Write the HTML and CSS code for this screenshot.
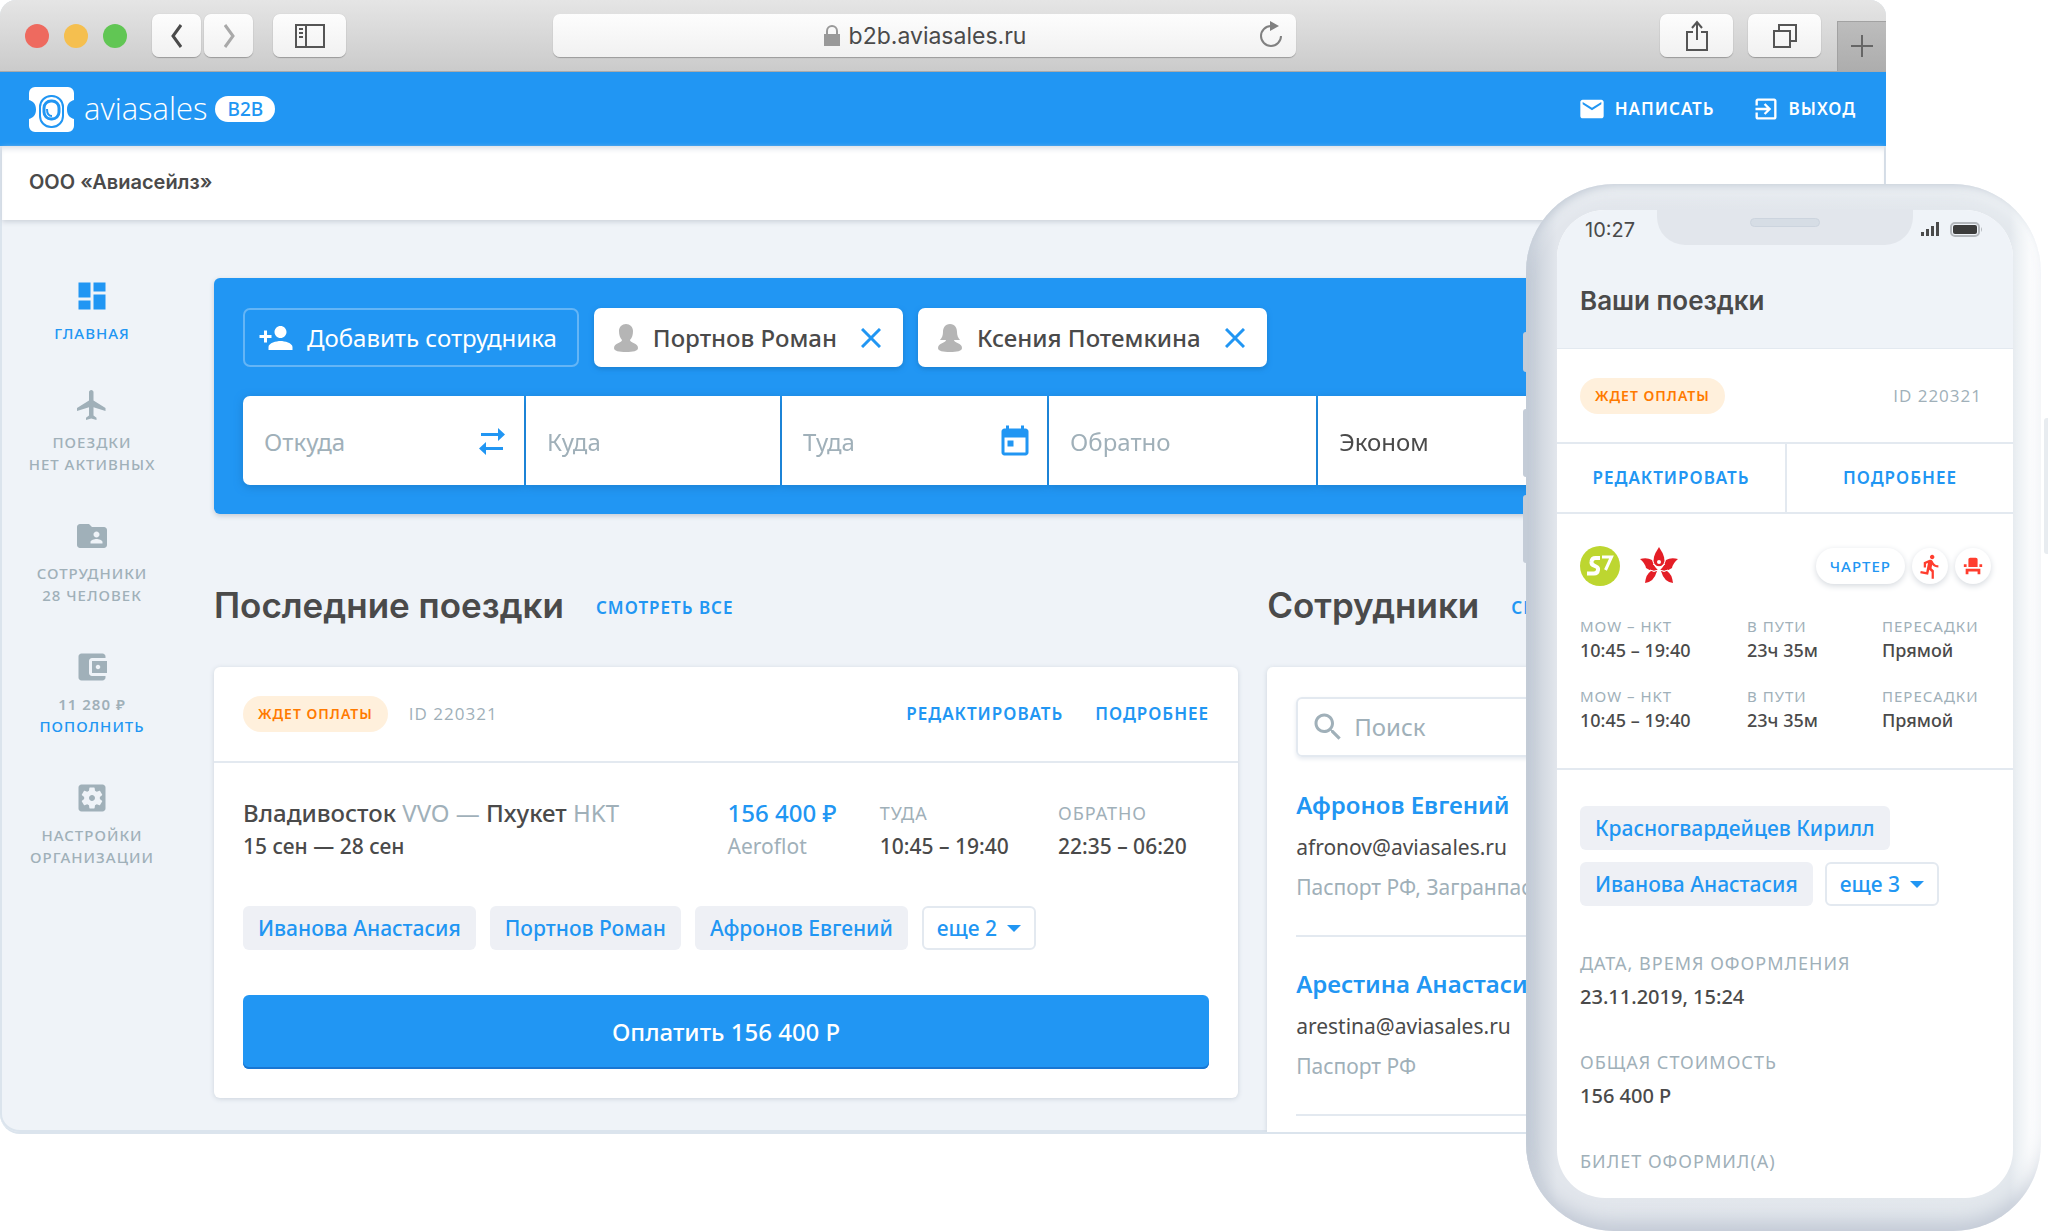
FILE: index.html
```
<!DOCTYPE html>
<html lang="ru">
<head>
<meta charset="utf-8">
<meta name="viewport" content="width=device-width, initial-scale=1">
<title>Aviasales B2B</title>
<link rel="stylesheet" href="styles.css">
</head>
<body>
<div class="stage">
  <div class="browser">
    <div class="chrome">
      <div class="lights"><span class="light light-red"></span><span class="light light-yellow"></span><span class="light light-green"></span></div>
      <div class="chrome-nav">
        <button class="chrome-btn" aria-label="Назад"><svg width="20" height="26" viewBox="0 0 20 26"><path d="M14 2 6 13l8 11" fill="none" stroke="#4a4a4a" stroke-width="3"/></svg></button>
        <button class="chrome-btn" aria-label="Вперёд"><svg width="20" height="26" viewBox="0 0 20 26"><path d="m6 2 8 11-8 11" fill="none" stroke="#a9a9a9" stroke-width="3"/></svg></button>
      </div>
      <button class="chrome-btn chrome-btn-wide" aria-label="Боковая панель"><svg width="30" height="24" viewBox="0 0 30 24"><path d="M1 1h28v22H1zM11 1v22" fill="none" stroke="#555" stroke-width="2"/><path d="M4 5h4M4 9h4M4 13h4" stroke="#555" stroke-width="2"/></svg></button>
      <div class="address">
        <svg width="18" height="22" viewBox="0 0 18 22"><path d="M1 9h16v12H1z" fill="#999"/><path d="M4 9V6a5 5 0 0 1 10 0v3" fill="none" stroke="#999" stroke-width="2"/></svg>
        <span>b2b.aviasales.ru</span>
        <button class="reload" aria-label="Обновить"><svg width="26" height="30" viewBox="0 0 26 30"><path d="M13 6a10 10 0 1 0 10 10" fill="none" stroke="#808080" stroke-width="2"/><path d="m12 1 9 5-9 5z" fill="#808080"/></svg></button>
      </div>
      <button class="chrome-btn chrome-btn-wide chrome-share" aria-label="Поделиться"><svg width="24" height="32" viewBox="0 0 24 32"><path d="M8 12H2v18h20V12h-6M12 20V3M7 8l5-6 5 6" fill="none" stroke="#555" stroke-width="2"/></svg></button>
      <button class="chrome-btn chrome-btn-wide" aria-label="Вкладки"><svg width="26" height="26" viewBox="0 0 26 26"><path d="M2 8h16v16H2zM7 8V2h17v16h-6" fill="none" stroke="#555" stroke-width="2"/></svg></button>
      <button class="new-tab" aria-label="Новая вкладка"><svg width="22" height="22" viewBox="0 0 22 22"><path d="M11 0v22M0 11h22" stroke="#666" stroke-width="2"/></svg></button>
    </div>

    <header class="topbar">
      <a class="brand" href="#">
        <svg width="45" height="45" viewBox="0 0 45 45"><path fill="#fff" d="M6 0h33a6 6 0 0 1 6 6v7c-4 1-7 4-7 9.500s3 8.500 7 9.500v7a6 6 0 0 1-6 6H6a6 6 0 0 1-6-6v-7c4-1 7-4 7-9.500S4 14 0 13V6a6 6 0 0 1 6-6z"/><rect x="11" y="9" width="23" height="31" rx="11" fill="none" stroke="#2196f3" stroke-width="2"/><rect x="15" y="14" width="15" height="18" rx="7" fill="none" stroke="#2196f3" stroke-width="3"/><path d="M18 22q0 7 5 7" fill="none" stroke="#2196f3" stroke-width="2"/></svg>
        <span class="brand-name">aviasales</span><span class="brand-tag">B2B</span>
      </a>
      <nav class="topnav">
        <a href="#"><svg width="28" height="28" viewBox="0 0 24 24"><path d="M20 4H4c-1.100 0-2 .9-2 2v12c0 1.100.9 2 2 2h16c1.100 0 2-.9 2-2V6c0-1.100-.9-2-2-2zm0 4-8 5-8-5V6l8 5 8-5v2z"/></svg>НАПИСАТЬ</a>
        <a href="#"><svg width="28" height="28" viewBox="0 0 24 24"><path d="M10.090 15.590L11.500 17l5-5-5-5-1.410 1.410L12.670 11H3v2h9.670l-2.580 2.590zM19 3H5c-1.110 0-2 .9-2 2v4h2V5h14v14H5v-4H3v4c0 1.100.89 2 2 2h14c1.100 0 2-.9 2-2V5c0-1.100-.9-2-2-2z"/></svg>ВЫХОД</a>
      </nav>
    </header>

    <div class="org">ООО «Авиасейлз»</div>

    <div class="body">
      <nav class="sidebar">
        <a class="side-item side-active" href="#"><svg width="36" height="36" viewBox="0 0 24 24"><path d="M3 13h8V3H3v10zm0 8h8v-6H3v6zm10 0h8V11h-8v10zm0-18v6h8V3h-8z"/></svg><span>ГЛАВНАЯ</span></a>
        <a class="side-item" href="#"><svg width="36" height="36" viewBox="0 0 24 24"><path d="M21 16v-2l-8-5V3.500c0-.83-.67-1.500-1.500-1.500S10 2.670 10 3.500V9l-8 5v2l8-2.500V19l-2 1.500V22l3.500-1 3.500 1v-1.500L13 19v-5.500l8 2.500z"/></svg><span>ПОЕЗДКИ</span><span>НЕТ АКТИВНЫХ</span></a>
        <a class="side-item" href="#"><svg width="36" height="36" viewBox="0 0 24 24"><path d="M20 6h-8l-2-2H4c-1.100 0-2 .9-2 2v12c0 1.100.9 2 2 2h16c1.100 0 2-.9 2-2V8c0-1.100-.9-2-2-2zm-5 3c1.100 0 2 .9 2 2s-.9 2-2 2-2-.9-2-2 .9-2 2-2zm4 8h-8v-1c0-1.330 2.670-2 4-2s4 .67 4 2v1z"/></svg><span>СОТРУДНИКИ</span><span>28 ЧЕЛОВЕК</span></a>
        <a class="side-item" href="#"><svg width="36" height="36" viewBox="0 0 24 24"><path d="M21 18v1c0 1.100-.9 2-2 2H5c-1.110 0-2-.9-2-2V5c0-1.100.89-2 2-2h14c1.100 0 2 .9 2 2v1h-9c-1.110 0-2 .9-2 2v8c0 1.100.89 2 2 2h9zm-9-2h10V8H12v8zm4-2.500c-.83 0-1.500-.67-1.500-1.500s.67-1.500 1.500-1.500 1.500.67 1.500 1.500-.67 1.500-1.500 1.500z"/></svg><span class="side-sum">11 280 ₽</span><span class="side-link">ПОПОЛНИТЬ</span></a>
        <a class="side-item" href="#"><svg width="36" height="36" viewBox="0 0 24 24"><path d="M12 10c-1.100 0-2 .9-2 2s.9 2 2 2 2-.9 2-2-.9-2-2-2zm7-7H5c-1.110 0-2 .9-2 2v14c0 1.100.89 2 2 2h14c1.110 0 2-.9 2-2V5c0-1.100-.89-2-2-2zm-1.750 9c0 .23-.02.46-.05.68l1.480 1.160c.13.11.17.3.08.45l-1.400 2.420c-.09.15-.27.21-.43.15l-1.740-.7c-.36.28-.76.51-1.180.69l-.26 1.850c-.03.17-.18.3-.35.3h-2.800c-.17 0-.32-.13-.35-.29l-.26-1.850c-.43-.18-.82-.41-1.180-.69l-1.740.7c-.16.06-.34 0-.43-.15l-1.400-2.420c-.09-.15-.05-.34.08-.45l1.480-1.160c-.03-.23-.05-.46-.05-.69 0-.23.02-.46.05-.68l-1.480-1.160c-.13-.11-.17-.3-.08-.45l1.400-2.420c.09-.15.27-.21.43-.15l1.740.7c.36-.28.76-.51 1.180-.69l.26-1.850c.03-.17.18-.3.35-.3h2.800c.17 0 .32.13.35.29l.26 1.850c.43.18.82.41 1.180.69l1.740-.7c.16-.06.34 0 .43.15l1.400 2.420c.09.15.05.34-.08.45l-1.480 1.160c.03.23.05.46.05.69z"/></svg><span>НАСТРОЙКИ</span><span>ОРГАНИЗАЦИИ</span></a>
      </nav>

      <main class="content">
        <form class="search">
          <div class="people">
            <button type="button" class="add-person"><svg width="36" height="36" viewBox="0 0 24 24"><path d="M15 12c2.210 0 4-1.790 4-4s-1.790-4-4-4-4 1.790-4 4 1.790 4 4 4zm-9-2V7H4v3H1v2h3v3h2v-3h3v-2H6zm9 4c-2.670 0-8 1.340-8 4v2h16v-2c0-2.660-5.330-4-8-4z"/></svg>Добавить сотрудника</button>
            <div class="person"><svg width="26" height="28" viewBox="0 0 26 28"><path d="M13 0c4 0 7 3 7 7 0 4-1 7-3 9 0 3 8 3 8 8 0 3-5 4-12 4S1 27 1 24c0-5 8-5 8-8-2-2-3-5-3-9 0-4 3-7 7-7z" fill="#b5b5b5"/></svg><span>Портнов Роман</span><button type="button" class="remove" aria-label="Убрать: Портнов Роман"><svg width="20" height="20" viewBox="0 0 20 20"><path d="m1 1 18 18M19 1 1 19" stroke="#2196f3" stroke-width="3"/></svg></button></div>
            <div class="person"><svg width="26" height="28" viewBox="0 0 26 28"><path d="M13 0c5 0 7 4 7 8 0 3 1 6 3 8h-6c0 3 8 3 8 8 0 3-5 4-12 4S1 27 1 24c0-5 8-5 8-8H3c2-2 3-5 3-8 0-4 2-8 7-8z" fill="#b5b5b5"/></svg><span>Ксения Потемкина</span><button type="button" class="remove" aria-label="Убрать: Ксения Потемкина"><svg width="20" height="20" viewBox="0 0 20 20"><path d="m1 1 18 18M19 1 1 19" stroke="#2196f3" stroke-width="3"/></svg></button></div>
          </div>
          <div class="fields">
            <div class="field"><input type="text" placeholder="Откуда" aria-label="Откуда"><button type="button" class="field-icon" aria-label="Поменять местами"><svg width="36" height="36" viewBox="0 0 36 36"><path d="M7 9h17V4l7 6.500-7 6.500v-5H7zM29 23H12v-5l-7 6.500 7 6.500v-5h17z"/></svg></button></div>
            <div class="field"><input type="text" placeholder="Куда" aria-label="Куда"></div>
            <div class="field"><input type="text" placeholder="Туда" aria-label="Туда"><button type="button" class="field-icon" aria-label="Календарь"><svg width="36" height="36" viewBox="0 0 24 24"><path d="M19 3h-1V1h-2v2H8V1H6v2H5c-1.110 0-2 .9-2 2v14c0 1.100.89 2 2 2h14c1.100 0 2-.9 2-2V5c0-1.100-.9-2-2-2zm0 16H5V9h14v10zM7 11h4v4H7z"/></svg></button></div>
            <div class="field"><input type="text" placeholder="Обратно" aria-label="Обратно"></div>
            <div class="field"><select aria-label="Класс"><option>Эконом</option></select></div>
          </div>
        </form>

        <div class="columns">
          <section class="column trips">
            <div class="heading"><h2>Последние поездки</h2><a class="caps-link" href="#">СМОТРЕТЬ ВСЕ</a></div>
            <article class="card">
              <div class="trip-head"><span class="badge">ЖДЕТ ОПЛАТЫ</span><span class="trip-id">ID 220321</span><a class="caps-link trip-edit" href="#">РЕДАКТИРОВАТЬ</a><a class="caps-link" href="#">ПОДРОБНЕЕ</a></div>
              <div class="trip-body">
                <div class="trip-info">
                  <div><p class="big strong">Владивосток <span class="muted">VVO —</span> Пхукет <span class="muted">HKT</span></p><p class="strong">15 сен — 28 сен</p></div>
                  <div><p class="big price">156 400 ₽</p><p class="faint">Aeroflot</p></div>
                  <div><p class="caps">ТУДА</p><p class="strong">10:45 – 19:40</p></div>
                  <div><p class="caps">ОБРАТНО</p><p class="strong">22:35 – 06:20</p></div>
                </div>
                <div class="chips trip-chips"><a class="chip" href="#">Иванова Анастасия</a><a class="chip" href="#">Портнов Роман</a><a class="chip" href="#">Афронов Евгений</a><button class="chip chip-more">еще 2<span class="caret"></span></button></div>
                <button class="pay">Оплатить 156 400 Р</button>
              </div>
            </article>
          </section>

          <section class="column">
            <div class="heading"><h2>Сотрудники</h2><a class="caps-link clipped" href="#">СМОТРЕТЬ ВСЕ</a></div>
            <div class="card staff">
              <label class="find"><svg width="36" height="36" viewBox="0 0 24 24"><path d="M15.500 14h-.79l-.28-.27C15.410 12.590 16 11.110 16 9.500 16 5.910 13.090 3 9.500 3S3 5.910 3 9.500 5.910 16 9.500 16c1.610 0 3.090-.59 4.230-1.570l.27.28v.79l5 4.990L20.490 19l-4.990-5zm-6 0C7.010 14 5 11.990 5 9.500S7.010 5 9.500 5 14 7.010 14 9.500 11.990 14 9.500 14z"/></svg><input type="search" placeholder="Поиск" aria-label="Поиск"></label>
              <div class="employee"><a class="employee-name" href="#">Афронов Евгений</a><p>afronov@aviasales.ru</p><p class="faint">Паспорт РФ, Загранпаспорт</p></div>
              <div class="employee"><a class="employee-name" href="#">Арестина Анастасия</a><p>arestina@aviasales.ru</p><p class="faint">Паспорт РФ</p></div>
            </div>
          </section>
        </div>
      </main>
    </div>
  </div>

  <div class="phone">
    <span class="key key-mute"></span><span class="key key-up"></span><span class="key key-down"></span><span class="key key-power"></span>
    <div class="notch"><span class="speaker"></span></div>
    <div class="screen">
      <div class="screen-head">
        <div class="status"><span>10:27</span>
          <svg width="62" height="18" viewBox="0 0 62 18"><path d="M0 11h3v4H0zM5 8h3v7H5zM10 5h3v10h-3zM15 1h3v14h-3z" fill="#4a4a4a"/><rect x="30" y="2" width="28" height="13" rx="4" fill="none" stroke="#b4b8bd" stroke-width="2"/><rect x="32" y="4" width="24" height="9" rx="2" fill="#3c3c3c"/><path d="M60 6q2 2.500 0 5z" fill="#b4b8bd"/></svg>
        </div>
        <h3>Ваши поездки</h3>
      </div>
      <div class="m-row"><span class="badge">ЖДЕТ ОПЛАТЫ</span><span class="trip-id">ID 220321</span></div>
      <div class="m-actions"><a class="caps-link" href="#">РЕДАКТИРОВАТЬ</a><a class="caps-link" href="#">ПОДРОБНЕЕ</a></div>
      <div class="m-flights">
        <div class="m-logos">
          <svg width="40" height="40" viewBox="0 0 40 40"><circle cx="20" cy="20" r="20" fill="#bdd630"/><path d="M20 12h-4.500q-3.500 0-4 3.500-.5 3 2.500 4l2 1q2.500 1 2 3.500-.5 3.500-4 3.500H7" fill="none" stroke="#fff" stroke-width="4"/><path d="M22 11h9.500l-6 13" fill="none" stroke="#fff" stroke-width="3"/></svg>
          <svg width="38" height="38" viewBox="0 0 38 38"><g fill="#e41e26"><path d="M19 0q8 12 4.500 17-4.500 5-9 0Q11 12 19 0z"/><path d="M0 12q7-2 12 1 2 7 6 10-7 2-12-2-1-5-6-9zM38 12q-7-2-12 1-2 7-6 10 7 2 12-2 1-5 6-9z"/><path d="M17 24q-3 11-12 12 1-9 6-12zM21 24q3 11 12 12-1-9-6-12z"/></g><circle cx="19" cy="15" r="2" fill="#fff"/><path d="M10 23q4 3 8 0M28 23q-4 3-8 0M13 17q6 6 12 0" fill="none" stroke="#fff" stroke-width="1"/></svg>
          <span class="pill">ЧАРТЕР</span>
          <span class="pill pill-round"><svg width="27" height="27" viewBox="0 0 24 24"><path d="M13.490 5.480c1.100 0 2-.9 2-2s-.9-2-2-2-2 .9-2 2 .9 2 2 2zm-3.600 13.900l1-4.400 2.100 2v6h2v-7.500l-2.100-2 .6-3c1.300 1.500 3.300 2.500 5.500 2.500v-2c-1.900 0-3.500-1-4.300-2.400l-1-1.600c-.4-.6-1-1-1.700-1-.3 0-.5.1-.8.1l-5.200 2.200v4.700h2v-3.400l1.800-.7-1.600 8.100-4.900-1-.4 2 7 1.400z"/></svg></span>
          <span class="pill pill-round"><svg width="22" height="22" viewBox="0 0 24 24"><path d="M4 18v3h3v-3h10v3h3v-6H4zm15-8h3v3h-3zM2 10h3v3H2zm15 3H7V5c0-1.100.9-2 2-2h6c1.100 0 2 .9 2 2v8z"/></svg></span>
        </div>
        <dl class="m-legs">
          <div><dt>MOW – HKT</dt><dd>10:45 – 19:40</dd></div><div><dt>В ПУТИ</dt><dd>23ч 35м</dd></div><div><dt>ПЕРЕСАДКИ</dt><dd>Прямой</dd></div>
          <div><dt>MOW – HKT</dt><dd>10:45 – 19:40</dd></div><div><dt>В ПУТИ</dt><dd>23ч 35м</dd></div><div><dt>ПЕРЕСАДКИ</dt><dd>Прямой</dd></div>
        </dl>
      </div>
      <div class="m-details">
        <div class="chips"><a class="chip" href="#">Красногвардейцев Кирилл</a><a class="chip" href="#">Иванова Анастасия</a><button class="chip chip-more">еще 3<span class="caret"></span></button></div>
        <dl class="m-facts">
          <div><dt>ДАТА, ВРЕМЯ ОФОРМЛЕНИЯ</dt><dd>23.11.2019, 15:24</dd></div>
          <div><dt>ОБЩАЯ СТОИМОСТЬ</dt><dd>156 400 Р</dd></div>
          <div><dt>БИЛЕТ ОФОРМИЛ(А)</dt></div>
        </dl>
      </div>
    </div>
  </div>
</div>
</body>
</html>
```
FILE: styles.css
```
:root {
  --blue: #2196f3;
  --text: #4a4a4a;
  --muted: #a0b0b9;
  --line: #e3e9f0;
  --page: #eff3f8;
}
* { box-sizing: border-box; }
body { margin: 0; background: #fff; color: var(--text); font: 400 21px/32px "Noto Sans", "Open Sans", sans-serif; }
a { color: inherit; text-decoration: none; }
p, h2, h3, dl, dd { margin: 0; }
button, input, select { font: inherit; color: inherit; border: 0; background: none; padding: 0; margin: 0; }
button { cursor: pointer; }
svg { display: block; flex: none; fill: currentColor; }

/* The phone shares the browser's grid cell and lies over its right edge */
.stage { display: grid; align-items: start; overflow: hidden; }
.browser, .phone { grid-area: 1 / 1; }

/* Browser window */
.browser { width: 92.1%; border-radius: 16px 16px 20px 20px; overflow: hidden; background: var(--page); border-bottom: 2px solid #dbe4ed; box-shadow: inset 0 0 0 2px #dbe4ed; }
.chrome { display: flex; align-items: center; height: 72px; padding-left: 25px; background: linear-gradient(#e5e5e5, #cbcbcb); border-bottom: 1px solid #aaa; }
.lights { display: flex; gap: 15px; margin-right: 25px; }
.light { width: 24px; height: 24px; border-radius: 50%; }
.light-red { background: #ee6a5f; }
.light-yellow { background: #f5bf4f; }
.light-green { background: #61c654; }
.chrome-nav { display: flex; gap: 3px; margin-right: 20px; }
.chrome-btn { display: flex; align-items: center; justify-content: center; width: 49px; height: 43px; border-radius: 7px; background: linear-gradient(#fdfdfd, #f1f1f1); box-shadow: 0 1px 1px #9a9a9a, 0 0 1px #bbb; }
.chrome-btn-wide { width: 73px; }
.address { display: flex; align-items: center; justify-content: center; gap: 8px; width: 743px; height: 43px; margin-left: 207px; position: relative; border-radius: 7px; background: linear-gradient(#fdfdfd, #f1f1f1); box-shadow: 0 1px 1px #9a9a9a; font: 400 23px/32px Inter, Roboto, sans-serif; }
.reload { position: absolute; right: 12px; top: 6px; }
.chrome-share { margin: 0 15px 0 auto; }
.new-tab { display: flex; align-items: center; justify-content: center; align-self: flex-end; width: 49px; height: 50px; margin-left: 16px; background: linear-gradient(#bdbdbd, #adadad); box-shadow: inset 1px 1px 0 #a2a2a2; }

.topbar { display: flex; align-items: center; justify-content: space-between; height: 74px; padding: 0 30px 0 29px; background: var(--blue); color: #fff; }
.brand { display: flex; align-items: center; }
.brand-name { margin: 0 8px 3px 10px; font: 300 31px/40px "Open Sans", sans-serif; }
.brand-tag { padding: 0 12px; border-radius: 13px; background: #fff; color: var(--blue); font-size: 19px; font-weight: 500; line-height: 26px; }
.topnav { display: flex; gap: 37px; font-size: 17px; font-weight: 600; letter-spacing: 1px; }
.topnav a { display: flex; align-items: center; gap: 9px; }
.org { height: 74px; padding: 0 27px; margin: 0 2px; background: #fff; box-shadow: inset 0 6px 6px -4px #d5dbe2, 0 2px 5px #ccd2da; position: relative; font: 600 20px/72px Inter, Roboto, sans-serif; }

.body { display: flex; }
.sidebar { display: flex; flex-direction: column; gap: 43px; width: 184px; flex: none; padding-top: 58px; }
.side-item { display: flex; flex-direction: column; align-items: center; color: var(--muted); font-size: 15px; font-weight: 500; line-height: 22px; letter-spacing: 1px; white-space: nowrap; }
.side-item svg { margin-bottom: 8px; }
.side-active, .side-link { color: var(--blue); }
.side-sum { font-weight: 600; }
.content { flex: 1; min-width: 0; padding: 58px 29px 0 30px; }

/* Search panel */
.search { padding: 30px 29px 29px; border-radius: 6px; background: var(--blue); box-shadow: 0 2px 5px #c6ccd5; }
.people { display: flex; gap: 15px; margin-bottom: 29px; font-size: 24px; }
.add-person { display: flex; align-items: center; gap: 13px; height: 59px; padding: 0 20px 0 13px; border: 2px solid #64b5f6; border-radius: 7px; color: #fff; }
.person { display: flex; align-items: center; height: 59px; padding: 0 22px 0 19px; border-radius: 7px; background: #fff; box-shadow: 0 2px 5px #1b7fd0; font-weight: 500; }
.person span { margin: 0 24px 0 14px; }
.fields { display: grid; grid-template-columns: 281fr 254fr 265fr 267fr 510fr; gap: 2px; font-size: 24px; filter: drop-shadow(0 2px 4px #1b7fd0); }
.field { display: flex; align-items: center; min-width: 0; height: 89px; padding: 2px 14px 0 21px; background: #fff; }
.field:first-child { border-radius: 7px 0 0 7px; }
.field:last-child { border-radius: 0 7px 7px 0; }
.field input, .field select { flex: 1; min-width: 0; width: 100%; appearance: none; }
.field-icon { color: var(--blue); }
input::placeholder { color: var(--muted); opacity: 1; }

/* Two-column area */
.columns { display: grid; grid-template-columns: 1024fr 590fr; gap: 29px; padding-top: 69px; }
.column { display: flex; flex-direction: column; min-width: 0; }
.trips { padding-bottom: 34px; }
.heading { display: flex; align-items: center; gap: 32px; margin-bottom: 40px; white-space: nowrap; }
.heading .caps-link { padding-top: 5px; }
.clipped { width: 56px; overflow: hidden; }
h2 { font: 600 35px/44px Inter, Roboto, sans-serif; }
.caps-link { color: var(--blue); font-size: 17px; font-weight: 600; letter-spacing: 1px; }
.card { border-radius: 6px; background: #fff; box-shadow: 0 1px 5px #ccd3dc; }
.trip-head { display: flex; align-items: center; height: 96px; padding: 0 29px; border-bottom: 2px solid var(--line); }
.badge { padding: 0 15px; border-radius: 18px; background: #fff0dc; color: #ff7a00; font-size: 14px; font-weight: 600; line-height: 36px; letter-spacing: 1px; }
.trip-id { margin-left: 21px; color: var(--muted); font: 500 17px/32px "Open Sans", sans-serif; letter-spacing: 1px; }
.trip-edit { margin: 0 32px 0 auto; }
.trip-body { padding: 34px 29px 29px; }
.trip-info { display: grid; grid-template-columns: 484fr 152fr 178fr 151fr; white-space: nowrap; }
.trip-info p + p { line-height: 34px; }
.big { font-size: 24px; }
.strong { font-weight: 500; }
.muted { color: var(--muted); font-weight: 400; }
.faint { color: var(--muted); }
.price { color: var(--blue); font-weight: 500; }
.caps { color: var(--muted); font-size: 18px; letter-spacing: 1px; }
.chips { display: flex; flex-wrap: wrap; gap: 12px; }
.trip-chips { gap: 14px; margin: 43px 0 45px; }
.chip { display: flex; align-items: center; height: 44px; padding: 0 15px; border-radius: 6px; background: #eef0f5; color: var(--blue); font-weight: 500; white-space: nowrap; }
.chip-more { gap: 10px; border: 2px solid var(--line); background: #fff; padding: 0 13px; }
.caret { border: 7px solid transparent; border-top-color: var(--blue); border-bottom: 0; }
.pay { display: block; width: 100%; height: 74px; border-radius: 6px; background: var(--blue); box-shadow: inset 0 -2px 0 #1976d2; color: #fff; font-size: 24px; font-weight: 500; }

.staff { flex: 1; padding: 30px 0 0 29px; border-radius: 6px 6px 0 0; }
.find { display: flex; align-items: center; gap: 8px; height: 60px; margin: 0 29px 31px 0; padding-left: 12px; border: 2px solid var(--line); border-radius: 6px; box-shadow: 0 2px 4px #e6eaf0; color: var(--muted); font-size: 24px; }
.find input { flex: 1; min-width: 0; appearance: none; }
.employee { padding-bottom: 28px; margin-bottom: 30px; border-bottom: 2px solid var(--line); line-height: 40px; }
.employee:last-child { margin-bottom: 16px; }
.employee-name { display: block; color: var(--blue); font-size: 24px; font-weight: 600; line-height: 34px; margin-bottom: 5px; }

/* Phone */
.phone { position: relative; justify-self: end; margin: 184px 7px 0 0; width: 515px; padding: 26px 28px 33px 31px; border-radius: 88px;
  background: linear-gradient(to right, #b4bdca 0, #c3cbd6 6px, #d3d9e1 16px, #e2e6ec 31px, #e3e8ed 484px, #edf1f4 492px, #fafbfc 504px, #fff 515px);
  box-shadow: inset 5px 6px 10px -4px #c3cbd6, inset 0 12px 18px -6px #f4f7f9, inset 0 -18px 18px -8px #c3cad6; }
.screen { border-radius: 48px; overflow: hidden; background: #fff; }
.screen-head { height: 139px; padding: 4px 30px 0 23px; background: var(--page); border-bottom: 1px solid var(--line); }
.status { display: flex; align-items: center; justify-content: space-between; padding-left: 5px; font: 400 20px/32px Inter, Roboto, sans-serif; }
h3 { margin-top: 39px; font: 600 26px/32px Inter, Roboto, sans-serif; }
.notch { position: absolute; top: 25px; left: 131px; width: 256px; height: 36px; border-radius: 0 0 28px 28px; background: #e2e6ec; }
.speaker { display: block; width: 70px; height: 9px; margin: 9px auto 0; border: 1px solid #ccd4de; border-radius: 5px; background: #d6dde5; }
.key { position: absolute; left: -3px; width: 4px; border-radius: 3px 0 0 3px; background: #c4ccd7; }
.key-mute { top: 148px; height: 40px; }
.key-up { top: 225px; height: 68px; }
.key-down { top: 311px; height: 68px; }
.key-power { left: auto; right: -7px; top: 234px; height: 136px; background: #e8ecf0; }
.m-row { display: flex; align-items: center; justify-content: space-between; height: 95px; padding: 0 31px 0 23px; border-bottom: 2px solid var(--line); }
.m-actions { display: grid; grid-template-columns: 1fr 1fr; height: 70px; border-bottom: 2px solid var(--line); }
.m-actions a { display: flex; align-items: center; justify-content: center; }
.m-actions a + a { border-left: 2px solid var(--line); }
.m-flights { padding: 32px 22px 36px 23px; border-bottom: 2px solid var(--line); }
.m-logos { display: flex; align-items: center; gap: 20px; margin-bottom: 28px; }
.pill { display: flex; align-items: center; justify-content: center; height: 36px; padding: 0 14px; margin-left: auto; border-radius: 18px; background: #fff; box-shadow: 0 2px 6px #d5d9de; color: var(--blue); font-size: 15px; font-weight: 500; letter-spacing: 1px; }
.pill-round { width: 36px; padding: 0; margin-left: -13px; color: #ff3d2e; }
.m-legs { display: grid; grid-template-columns: 167fr 135fr 109fr; row-gap: 22px; line-height: 24px; white-space: nowrap; }
.m-legs dt { color: var(--muted); font-size: 15px; letter-spacing: 1px; }
.m-legs dd { font-size: 18px; font-weight: 500; }
.m-details { padding: 36px 23px 25px; }
.m-facts { display: flex; flex-direction: column; gap: 39px; margin-top: 45px; }
.m-facts dt { color: var(--muted); font-size: 18px; line-height: 24px; letter-spacing: 1px; }
.m-facts dd { margin-top: 8px; font-size: 20px; font-weight: 500; line-height: 28px; }
```
